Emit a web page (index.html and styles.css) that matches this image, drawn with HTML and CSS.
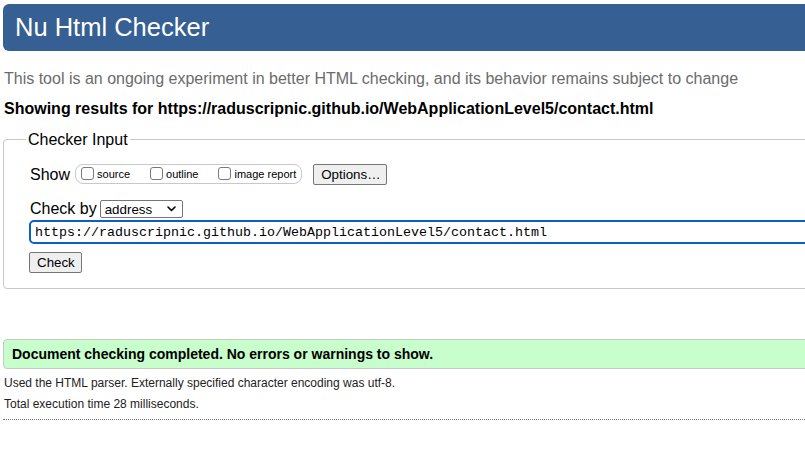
FILE: index.html
```html
<!DOCTYPE html>
<html lang="en">
<head>
<meta charset="utf-8">
<title>Nu Html Checker</title>
<link rel="stylesheet" href="styles.css">
</head>
<body>
<div class="page">
  <h1 class="banner">Nu Html Checker</h1>
  <p class="intro">This tool is an ongoing experiment in better HTML checking, and its behavior remains subject to change</p>
  <p class="results-for">Showing results for https://raduscripnic.github.io/WebApplicationLevel5/contact.html</p>
  <form class="checker">
    <fieldset class="checker-box">
      <legend class="checker-legend">Checker Input</legend>
      <div class="row show-row">
        <span class="row-label">Show</span>
        <span class="show-group">
          <label class="opt"><input type="checkbox" class="cb">source</label>
          <label class="opt"><input type="checkbox" class="cb">outline</label>
          <label class="opt last"><input type="checkbox" class="cb">image report</label>
        </span>
        <button type="button" class="btn options-btn">Options…</button>
      </div>
      <div class="row by-row">
        <span class="row-label">Check by</span>
        <span class="select-wrap">
          <select class="by-select"><option>address</option></select>
          <svg class="chev" width="9" height="6" viewBox="0 0 9 6"><path d="M1 1 L4.5 4.5 L8 1" fill="none" stroke="#000" stroke-width="1.6" stroke-linecap="round" stroke-linejoin="round"/></svg>
        </span>
      </div>
      <div class="url-row">
        <input type="text" class="url" value="https://raduscripnic.github.io/WebApplicationLevel5/contact.html">
      </div>
      <div class="submit-row">
        <button type="button" class="btn check-btn">Check</button>
      </div>
    </fieldset>
  </form>
  <p class="success">Document checking completed. No errors or warnings to show.</p>
  <p class="details">Used the HTML parser. Externally specified character encoding was utf-8.</p>
  <p class="details">Total execution time 28 milliseconds.</p>
  <hr class="end">
</div>
</body>
</html>
```
FILE: styles.css
```css
html { overflow: hidden; }
body {
  margin: 0;
  font-family: "Liberation Sans", Arial, Helvetica, sans-serif;
  color: #000;
  background: #fff;
}
.page {
  width: 840px;
  padding: 4px 0 0 3px;
}
.banner {
  margin: 0;
  height: 47px;
  box-sizing: border-box;
  padding: 0 0 0 12px;
  background: #365f93;
  color: #fff;
  font-size: 25.5px;
  font-weight: normal;
  line-height: 47px;
  border-radius: 6px 0 0 6px;
}
.intro {
  margin: 18px 0 0 1px;
  font-size: 16px;
  line-height: 19px;
  color: #6b6b6b;
}
.results-for {
  margin: 11px 0 0 1px;
  font-size: 16px;
  line-height: 19px;
  font-weight: bold;
}
.checker { margin: 12px 0 0 0; }
.checker-box {
  margin: 0;
  border: 1px solid #c8c8c8;
  border-radius: 4px;
  padding: 0 0 15px 26px;
}
.checker-legend {
  margin-left: -4px;
  padding: 0 2px;
  font-size: 16px;
  line-height: 19px;
}
.row {
  display: flex;
  align-items: center;
}
.show-row { margin-top: 14px; height: 22px; }
.row-label { font-size: 16px; line-height: 19px; }
.show-group {
  display: inline-flex;
  align-items: center;
  margin-left: 5px;
  height: 20px;
  box-sizing: border-box;
  border: 1px solid #c8c8c8;
  border-radius: 8px;
  padding: 0 5px;
}
.opt {
  display: inline-flex;
  align-items: center;
  font-size: 11px;
  margin-right: 20px;
}
.opt.last { margin-right: 0; }
.cb {
  appearance: none;
  -webkit-appearance: none;
  width: 13px;
  height: 13px;
  margin: -2px 3px 0 0;
  border: 1px solid #7a7a7a;
  border-radius: 3px;
  background: #fff;
  box-sizing: border-box;
}
.btn {
  font-family: "Liberation Sans", Arial, sans-serif;
  font-size: 13.33px;
  background: #efefef;
  border: 1px solid #767676;
  border-radius: 2px;
  color: #000;
  padding: 0 7px;
  box-sizing: border-box;
}
.options-btn { margin-left: 11px; height: 21px; width: 74px; }
.by-row { margin-top: 14px; height: 19px; }
.select-wrap {
  position: relative;
  display: inline-block;
  margin-left: 3px;
  height: 18px;
}
.by-select {
  appearance: none;
  -webkit-appearance: none;
  width: 83px;
  height: 18px;
  box-sizing: border-box;
  border: 1px solid #767676;
  border-radius: 2px;
  background: #fff;
  font-family: "Liberation Sans", Arial, sans-serif;
  font-size: 13.33px;
  padding: 0 0 0 4px;
  color: #000;
}
.chev {
  position: absolute;
  left: 67px;
  top: 6px;
  pointer-events: none;
}
.url-row { margin-top: 2px; margin-left: -1px; }
.url {
  display: block;
  width: 820px;
  height: 24px;
  box-sizing: border-box;
  border: 2px solid #0b5fcb;
  border-radius: 5px;
  padding: 0 0 0 4px;
  font-family: "Liberation Mono", "Courier New", monospace;
  font-size: 13.33px;
  color: #000;
  outline: none;
}
.submit-row { margin-top: 8px; margin-left: -1px; }
.check-btn { height: 21px; width: 53px; display: block; }
.success {
  margin: 50px 0 1px 0;
  height: 30px;
  box-sizing: border-box;
  border: 1px solid #c8c8c8;
  border-radius: 4px 0 0 4px;
  background: #c8fecc;
  font-weight: bold;
  font-size: 14px;
  line-height: 28px;
  padding-left: 8px;
}
.details {
  margin: 7px 0 0 1px;
  font-size: 12px;
  line-height: 14px;
  color: #222;
}
.end {
  margin: 8px 0 0 0;
  border: 0;
  border-top: 1px dotted #777;
  height: 0;
}
```
